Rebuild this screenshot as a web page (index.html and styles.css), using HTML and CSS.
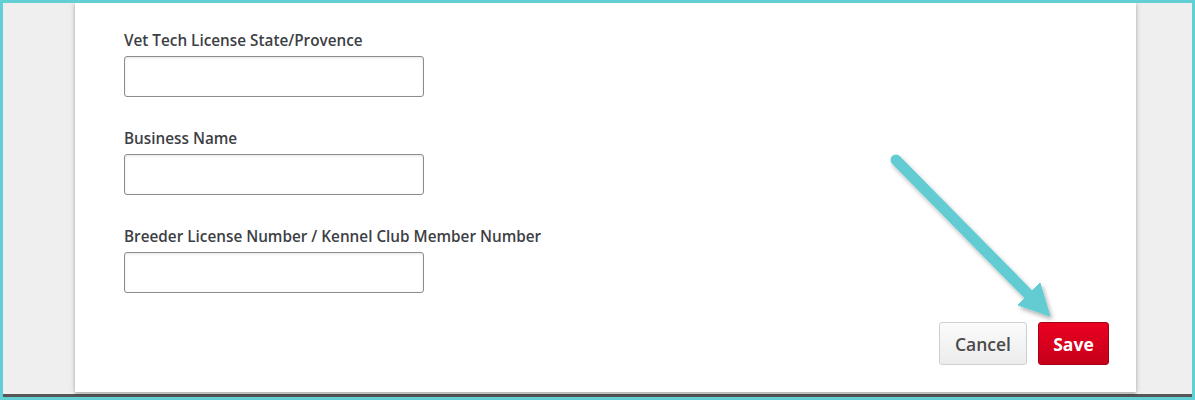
FILE: index.html
```html
<!DOCTYPE html>
<html>
<head>
<meta charset="utf-8">
<link rel="stylesheet" href="styles.css">
</head>
<body>
<div class="frame">
  <div class="stage">
    <div class="card">
      <div class="field">
        <label class="label">Vet Tech License State/Provence</label>
        <input class="input" type="text">
      </div>
      <div class="field">
        <label class="label">Business Name</label>
        <input class="input" type="text">
      </div>
      <div class="field field-last">
        <label class="label">Breeder License Number / Kennel Club Member Number</label>
        <input class="input" type="text">
      </div>
      <div class="actions">
        <button class="btn btn-cancel">Cancel</button>
        <button class="btn btn-save">Save</button>
      </div>
    </div>
  </div>
  <svg class="arrow" width="1195" height="400" viewBox="0 0 1195 400">
    <defs>
      <filter id="sh" x="-20%" y="-20%" width="140%" height="140%">
        <feDropShadow dx="2" dy="3" stdDeviation="2" flood-color="#000" flood-opacity="0.3"/>
      </filter>
    </defs>
    <g filter="url(#sh)" fill="#62ccd2" stroke="#62ccd2">
      <line x1="896" y1="160" x2="1030" y2="296" stroke-width="11" stroke-linecap="round"/>
      <polygon points="1050,316 1018,305 1040,283" stroke-width="1" stroke-linejoin="round"/>
    </g>
  </svg>
</div>
</body>
</html>
```
FILE: styles.css
```css
html, body {
  margin: 0;
  padding: 0;
}
body {
  font-family: "Open Sans", "Liberation Sans", sans-serif;
}
.frame {
  position: relative;
  width: 1195px;
  height: 400px;
  box-sizing: border-box;
  border: 3px solid #62cfd5;
  background: #efefef;
  overflow: hidden;
}
.stage {
  height: 100%;
  box-sizing: border-box;
  padding: 0 56px 0 72px;
  box-shadow: inset 0 -3px 0 #565656;
}
.card {
  background: #fff;
  height: 389px;
  box-sizing: border-box;
  padding: 27px 27px 0 49px;
  box-shadow: 0 0 5px rgba(0,0,0,0.25), 0 3px 2px rgba(0,0,0,0.12);
}
.field {
  display: flex;
  flex-direction: column;
  align-items: flex-start;
  margin-bottom: 31px;
}
.field-last {
  margin-top: 1px;
}
.label {
  font-size: 15.3px;
  font-weight: 600;
  line-height: 20px;
  color: #3d3f45;
  margin-bottom: 6px;
}
.input {
  width: 300px;
  height: 41px;
  box-sizing: border-box;
  border: 1px solid #8c8c8c;
  border-radius: 3px;
  background: #fff;
  box-shadow: inset 0 1px 3px rgba(0,0,0,0.1);
  margin: 0;
}
.actions {
  display: flex;
  justify-content: flex-end;
  gap: 11px;
  margin-top: -2px;
}
.btn {
  height: 43px;
  box-sizing: border-box;
  border-radius: 3px;
  font-family: "Open Sans", "Liberation Sans", sans-serif;
  font-size: 17.5px;
  font-weight: 600;
  padding: 0 10px;
  margin: 0;
}
.btn-cancel {
  width: 88px;
  background: linear-gradient(#fbfbfb, #ececec);
  border: 1px solid #cfcfcf;
  color: #4a4a4a;
}
.btn-save {
  width: 71px;
  background: linear-gradient(#ea0020, #c6001a);
  border: 1px solid #a50016;
  color: #fff;
  font-weight: 700;
}
.arrow {
  position: absolute;
  left: -3px;
  top: -3px;
  pointer-events: none;
}
```
